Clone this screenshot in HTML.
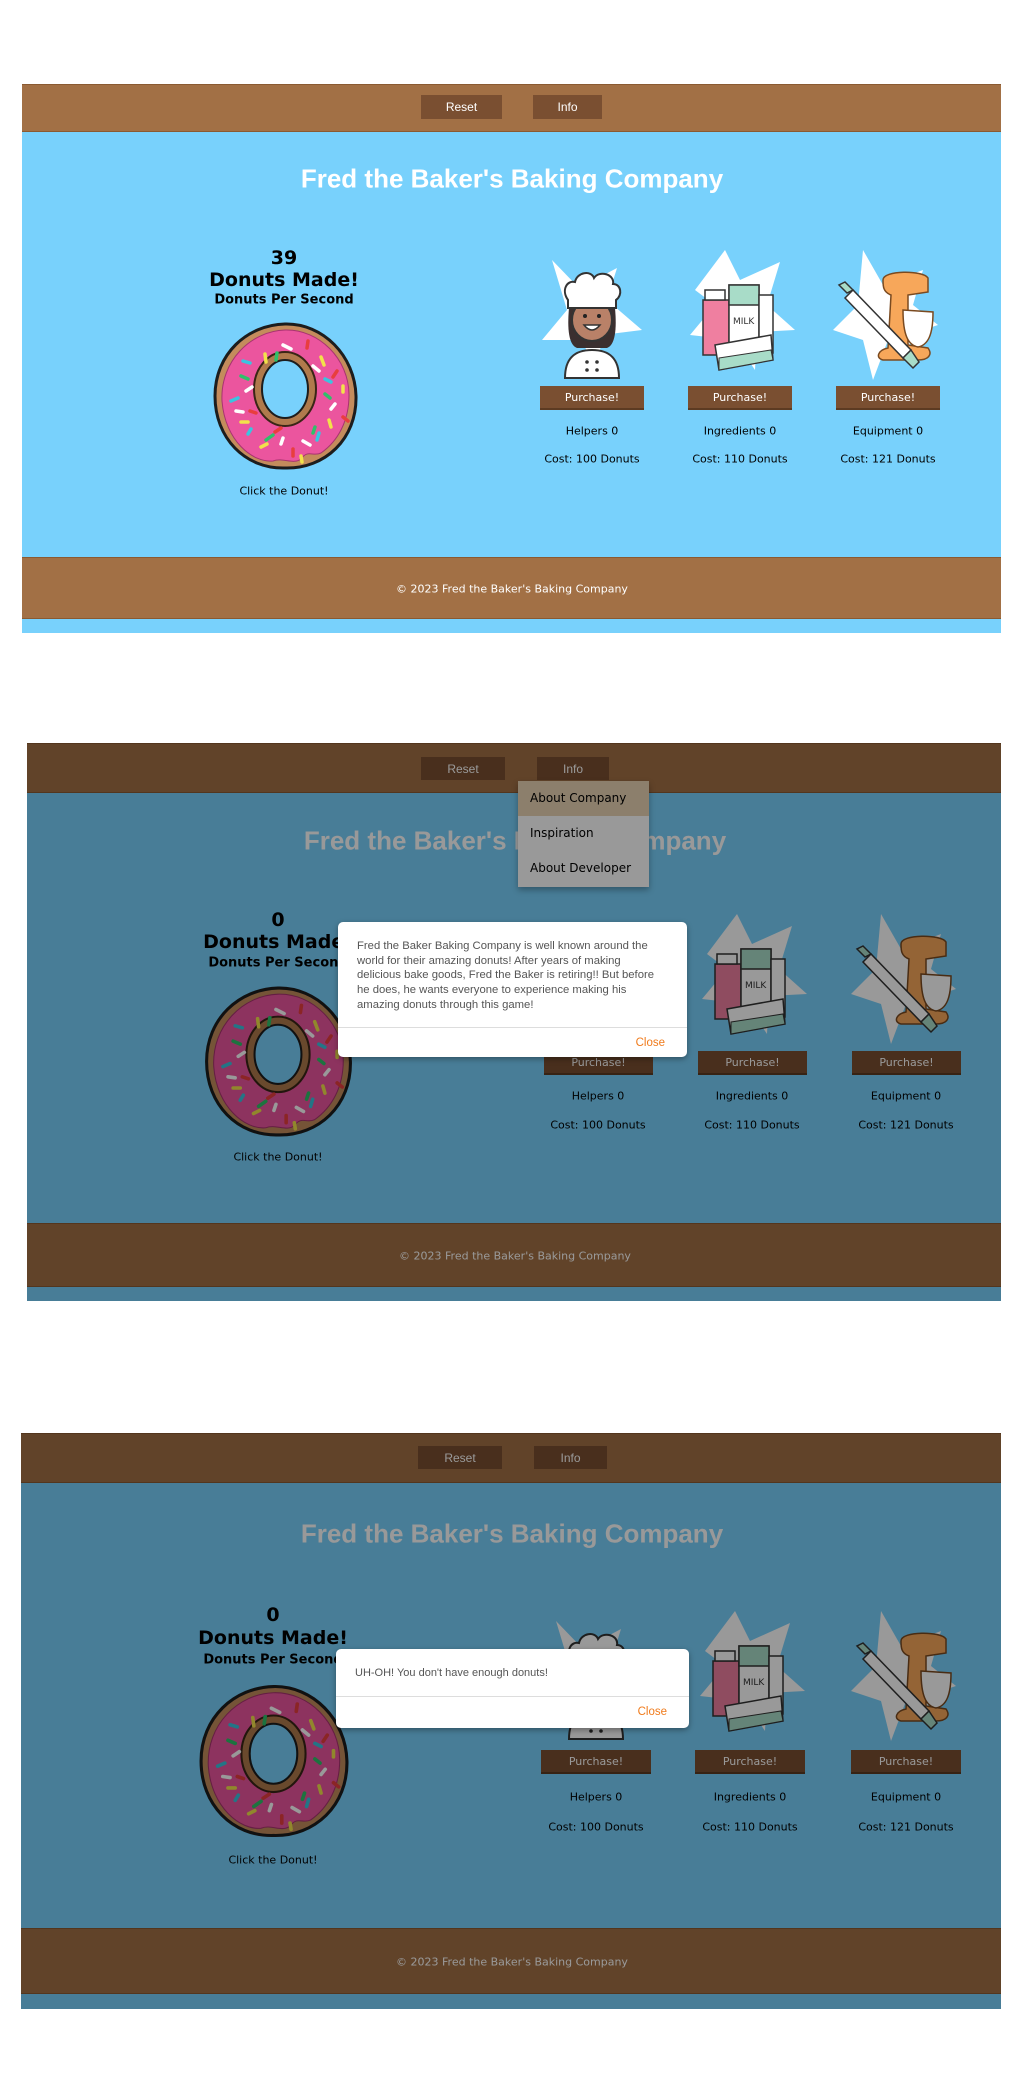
<!DOCTYPE html>
<html><head><meta charset="utf-8">
<style>
*{margin:0;padding:0;box-sizing:border-box}
body{width:1024px;height:2076px;background:#fff;position:relative;overflow:hidden;font-family:"DejaVu Sans",Verdana,sans-serif}
.p{position:absolute;background:#78d1fc;overflow:hidden}
.nav,.ft{position:absolute;left:0;right:0;background:#a27045;border-top:1px solid #8a5a32;border-bottom:1px solid #8a5a32}
.btn{position:absolute;background:#7a4f31;color:#fff;font:12px "Liberation Sans",Arial,sans-serif;display:flex;align-items:center;justify-content:center}
.c{position:absolute;transform:translate(-50%,-50%);white-space:nowrap;text-align:center}
.title{font:bold 26px "Liberation Sans",Arial,sans-serif;color:#fff}
.n{font-weight:bold;font-size:19px;color:#000}
.dps{font-weight:bold;font-size:13px;color:#000}
.sm{font-size:11px;color:#000}
.ftx{font-size:11px;color:#fff}
.pb{position:absolute;background:#7a4f31;color:#fff;font-size:11px;display:flex;align-items:center;justify-content:center;border-bottom:2px solid #5d3b22}
.dim{position:absolute;inset:0;background:rgba(0,0,0,0.4)}
.modal{position:absolute;background:#fff;border-radius:5px;box-shadow:0 2px 6px rgba(0,0,0,.35);font:11px "Liberation Sans",Arial,sans-serif;color:#555}
.close{position:absolute;color:#f07b1c;font:11.5px "Liberation Sans",Arial,sans-serif}
svg.u{position:absolute}
</style></head><body>
<svg width="0" height="0" style="position:absolute">
<defs>
<symbol id="donut" viewBox="0 0 145 150">
<path d="M72 3 C110 2 142 35 143 75 C144 118 112 148 72 147 C32 148 2 117 2 75 C2 33 34 4 72 3Z" fill="#c48c5c" stroke="#1d1d1d" stroke-width="3"/>
<path d="M72 9 C106 8 136 38 136 74 C136 100 125 120 108 132 C100 136 95 128 88 138 C80 144 70 136 60 140 C40 142 12 120 9 80 C7 40 38 10 72 9Z" fill="#eb559e" stroke="#a83370" stroke-width="1"/>
<ellipse cx="72" cy="68" rx="31" ry="37" fill="#b07a4c" stroke="#3a2616" stroke-width="2"/>
<ellipse cx="72" cy="68" rx="23" ry="29" fill="#78d1fc" stroke="#1d1d1d" stroke-width="2"/>
<g stroke-width="3.5" stroke-linecap="round">
<line x1="95" y1="20" x2="94" y2="27" stroke="#e83e3e"/><line x1="70" y1="24" x2="78" y2="28" stroke="#fff"/>
<line x1="30" y1="40" x2="37" y2="42" stroke="#3bc4e0"/><line x1="52" y1="33" x2="53" y2="41" stroke="#f2e24a"/>
<line x1="64" y1="32" x2="63" y2="39" stroke="#2fc06a"/><line x1="108" y1="36" x2="111" y2="44" stroke="#f2e24a"/>
<line x1="100" y1="45" x2="106" y2="50" stroke="#fff"/><line x1="124" y1="50" x2="120" y2="56" stroke="#e83e3e"/>
<line x1="28" y1="55" x2="35" y2="58" stroke="#2fc06a"/>
<line x1="112" y1="58" x2="118" y2="61" stroke="#3bc4e0"/><line x1="130" y1="65" x2="130" y2="71" stroke="#f2e24a"/>
<line x1="33" y1="70" x2="39" y2="66" stroke="#fff"/><line x1="112" y1="73" x2="117" y2="77" stroke="#2fc06a"/>
<line x1="18" y1="80" x2="25" y2="77" stroke="#3bc4e0"/><line x1="118" y1="88" x2="122" y2="83" stroke="#fff"/>
<line x1="23" y1="90" x2="30" y2="91" stroke="#fff"/><line x1="37" y1="90" x2="43" y2="92" stroke="#e83e3e"/>
<line x1="130" y1="96" x2="135" y2="100" stroke="#e83e3e"/><line x1="28" y1="101" x2="35" y2="101" stroke="#f2e24a"/>
<line x1="116" y1="99" x2="118" y2="106" stroke="#f2e24a"/><line x1="35" y1="113" x2="38" y2="108" stroke="#3bc4e0"/>
<line x1="53" y1="119" x2="60" y2="114" stroke="#2fc06a"/><line x1="62" y1="111" x2="68" y2="107" stroke="#e83e3e"/>
<line x1="106" y1="112" x2="104" y2="119" stroke="#3bc4e0"/><line x1="68" y1="123" x2="70" y2="117" stroke="#fff"/>
<line x1="90" y1="120" x2="97" y2="124" stroke="#fff"/><line x1="48" y1="126" x2="54" y2="123" stroke="#f2e24a"/>
<line x1="80" y1="128" x2="80" y2="135" stroke="#e83e3e"/><line x1="88" y1="135" x2="89" y2="141" stroke="#f2e24a"/>
<line x1="100" y1="112" x2="102" y2="106" stroke="#2fc06a"/>
</g>
</symbol>
<symbol id="chef" viewBox="0 0 110 130">
<polygon points="15,10 42,38 80,18 70,50 105,80 65,85 60,125 45,90 5,90 30,60" fill="#fff"/>
<path d="M28 128 C28 108 38 100 55 100 C72 100 82 108 82 128Z" fill="#fff" stroke="#333" stroke-width="2"/>
<path d="M32 58 C30 80 32 95 40 98 L70 98 C78 95 80 80 78 58Z" fill="#3b2f2f"/>
<ellipse cx="55" cy="70" rx="20" ry="21" fill="#b98168" stroke="#333" stroke-width="2"/>
<circle cx="48" cy="66" r="2" fill="#222"/><circle cx="62" cy="66" r="2" fill="#222"/>
<path d="M47 75 Q55 85 63 75Z" fill="#fff" stroke="#333" stroke-width="1.5"/>
<path d="M31 50 C24 40 30 30 38 32 C40 22 54 20 57 28 C62 20 78 24 76 34 C84 34 86 45 79 50 L79 58 L31 58Z" fill="#fff" stroke="#333" stroke-width="2"/>
<circle cx="50" cy="112" r="1.8" fill="#333"/><circle cx="60" cy="112" r="1.8" fill="#333"/><circle cx="50" cy="120" r="1.8" fill="#333"/><circle cx="60" cy="120" r="1.8" fill="#333"/>
</symbol>
<symbol id="ingr" viewBox="0 0 110 130">
<polygon points="40,0 55,30 95,12 82,55 110,80 72,82 70,120 50,90 5,85 30,55 10,40" fill="#fff"/>
<rect x="18" y="50" width="26" height="55" fill="#ef7fa0" stroke="#333" stroke-width="1.5"/>
<rect x="20" y="40" width="20" height="10" fill="#fff" stroke="#333" stroke-width="1.5"/>
<rect x="44" y="35" width="30" height="62" fill="#fff" stroke="#333" stroke-width="1.5"/>
<rect x="44" y="35" width="30" height="20" fill="#a8dcc8" stroke="#333" stroke-width="1.5"/>
<rect x="74" y="45" width="14" height="58" fill="#fff" stroke="#333" stroke-width="1.5"/>
<text x="48" y="74" font-size="9" font-family="DejaVu Sans" fill="#333">MILK</text>
<path d="M30 95 L86 85 L88 110 L34 120Z" fill="#fff" stroke="#333" stroke-width="1.5"/>
<path d="M34 108 L86 100 L88 110 L34 120Z" fill="#a8dcc8" stroke="#333" stroke-width="1"/>
</symbol>
<symbol id="mixer" viewBox="0 0 110 130">
<polygon points="30,0 50,35 90,20 80,55 105,75 75,85 80,110 55,90 40,130 30,90 0,80 25,55" fill="#fff"/>
<path d="M50 30 C50 20 90 20 95 28 L95 42 L75 45 L75 95 L95 98 C100 105 95 110 85 110 L50 110 C42 108 45 100 55 98 L58 45 C50 42 50 36 50 30Z" fill="#f7a75a" stroke="#7a4a20" stroke-width="1.5"/>
<path d="M70 60 L100 62 C100 85 95 95 85 97 C75 95 70 85 70 60Z" fill="#fff" stroke="#7a4a20" stroke-width="1.5"/>
<path d="M12 48 L70 108 L78 100 L20 40Z" fill="#fff" stroke="#333" stroke-width="1.5"/>
<path d="M6 35 L14 43 L20 40 L12 32Z" fill="#a8dcc8" stroke="#333" stroke-width="1.5"/>
<path d="M70 108 L80 118 L86 112 L78 100Z" fill="#a8dcc8" stroke="#333" stroke-width="1.5"/>
</symbol>
</defs></svg>

<!-- PANEL 1 -->
<div class="p" style="left:22px;top:84px;width:979px;height:549px">
<div class="nav" style="top:0;height:48px"></div>
<div class="btn" style="left:399px;top:11px;width:81px;height:24px">Reset</div>
<div class="btn" style="left:511px;top:11px;width:69px;height:24px">Info</div>
<div class="c title" style="left:490px;top:95px">Fred the Baker's Baking Company</div>
<div class="c n" style="left:262px;top:174px">39</div>
<div class="c n" style="left:262px;top:196px">Donuts Made!</div>
<div class="c dps" style="left:262px;top:216px">Donuts Per Second</div>
<svg class="u" style="left:191px;top:237px" width="145" height="150"><use href="#donut"/></svg>
<div class="c sm" style="left:262px;top:407px">Click the Donut!</div>
<svg class="u" style="left:515px;top:166px" width="110" height="130"><use href="#chef"/></svg>
<svg class="u" style="left:663px;top:166px" width="110" height="130"><use href="#ingr"/></svg>
<svg class="u" style="left:811px;top:166px" width="110" height="130"><use href="#mixer"/></svg>
<div class="pb" style="left:518px;top:302px;width:104px;height:24px">Purchase!</div>
<div class="pb" style="left:666px;top:302px;width:104px;height:24px">Purchase!</div>
<div class="pb" style="left:814px;top:302px;width:104px;height:24px">Purchase!</div>
<div class="c sm" style="left:570px;top:347px">Helpers 0</div>
<div class="c sm" style="left:718px;top:347px">Ingredients 0</div>
<div class="c sm" style="left:866px;top:347px">Equipment 0</div>
<div class="c sm" style="left:570px;top:375px">Cost: 100 Donuts</div>
<div class="c sm" style="left:718px;top:375px">Cost: 110 Donuts</div>
<div class="c sm" style="left:866px;top:375px">Cost: 121 Donuts</div>
<div class="ft" style="top:473px;height:62px"></div>
<div class="c ftx" style="left:490px;top:505px">© 2023 Fred the Baker's Baking Company</div>
</div>

<!-- PANEL 2 -->
<div class="p" style="left:27px;top:743px;width:974px;height:558px">
<div class="nav" style="top:0;height:50px"></div>
<div class="btn" style="left:394px;top:14px;width:84px;height:23px">Reset</div>
<div class="btn" style="left:510px;top:14px;width:72px;height:23px">Info</div>
<div class="c title" style="left:488px;top:98px">Fred the Baker's Baking Company</div>
<div class="c n" style="left:251px;top:177px">0</div>
<div class="c n" style="left:251px;top:199px">Donuts Made!</div>
<div class="c dps" style="left:251px;top:220px">Donuts Per Second</div>
<svg class="u" style="left:177px;top:242px" width="149" height="153"><use href="#donut"/></svg>
<div class="c sm" style="left:251px;top:414px">Click the Donut!</div>
<svg class="u" style="left:516px;top:171px" width="110" height="130"><use href="#chef"/></svg>
<svg class="u" style="left:670px;top:171px" width="110" height="130"><use href="#ingr"/></svg>
<svg class="u" style="left:824px;top:171px" width="110" height="130"><use href="#mixer"/></svg>
<div class="pb" style="left:517px;top:308px;width:109px;height:24px">Purchase!</div>
<div class="pb" style="left:671px;top:308px;width:109px;height:24px">Purchase!</div>
<div class="pb" style="left:825px;top:308px;width:109px;height:24px">Purchase!</div>
<div class="c sm" style="left:571px;top:353px">Helpers 0</div>
<div class="c sm" style="left:725px;top:353px">Ingredients 0</div>
<div class="c sm" style="left:879px;top:353px">Equipment 0</div>
<div class="c sm" style="left:571px;top:382px">Cost: 100 Donuts</div>
<div class="c sm" style="left:725px;top:382px">Cost: 110 Donuts</div>
<div class="c sm" style="left:879px;top:382px">Cost: 121 Donuts</div>
<div class="ft" style="top:480px;height:64px"></div>
<div class="c ftx" style="left:488px;top:513px">© 2023 Fred the Baker's Baking Company</div>
<div class="dim"></div>
</div>
<div style="position:absolute;left:518px;top:781px;width:131px;height:106px;background:#999;box-shadow:0 3px 6px rgba(0,0,0,.3);font-size:12px;color:#000">
<div style="height:35px;background:#8c7f6c;padding:10px 0 0 12px">About Company</div>
<div style="height:35px;padding:10px 0 0 12px">Inspiration</div>
<div style="height:36px;padding:10px 0 0 12px">About Developer</div>
</div>
<div class="modal" style="left:338px;top:922px;width:349px;height:135px">
<div style="position:absolute;left:19px;top:17px;width:305px;line-height:14.7px;font-size:11.3px">Fred the Baker Baking Company is well known around the world for their amazing donuts! After years of making delicious bake goods, Fred the Baker is retiring!! But before he does, he wants everyone to experience making his amazing donuts through this game!</div>
<div style="position:absolute;left:0;right:0;top:105px;border-top:1px solid #ddd"></div>
<div class="close" style="right:22px;top:115px">Close</div>
</div>

<!-- PANEL 3 -->
<div class="p" style="left:21px;top:1433px;width:980px;height:576px">
<div class="nav" style="top:0;height:50px"></div>
<div class="btn" style="left:397px;top:13px;width:84px;height:23px">Reset</div>
<div class="btn" style="left:513px;top:13px;width:73px;height:23px">Info</div>
<div class="c title" style="left:491px;top:101px">Fred the Baker's Baking Company</div>
<div class="c n" style="left:252px;top:182px">0</div>
<div class="c n" style="left:252px;top:205px">Donuts Made!</div>
<div class="c dps" style="left:252px;top:227px">Donuts Per Second</div>
<svg class="u" style="left:178px;top:249px" width="150" height="158"><use href="#donut"/></svg>
<div class="c sm" style="left:252px;top:427px">Click the Donut!</div>
<svg class="u" style="left:520px;top:176px" width="110" height="134"><use href="#chef"/></svg>
<svg class="u" style="left:674px;top:176px" width="110" height="134"><use href="#ingr"/></svg>
<svg class="u" style="left:830px;top:176px" width="110" height="134"><use href="#mixer"/></svg>
<div class="pb" style="left:520px;top:317px;width:110px;height:24px">Purchase!</div>
<div class="pb" style="left:674px;top:317px;width:110px;height:24px">Purchase!</div>
<div class="pb" style="left:830px;top:317px;width:110px;height:24px">Purchase!</div>
<div class="c sm" style="left:575px;top:364px">Helpers 0</div>
<div class="c sm" style="left:729px;top:364px">Ingredients 0</div>
<div class="c sm" style="left:885px;top:364px">Equipment 0</div>
<div class="c sm" style="left:575px;top:394px">Cost: 100 Donuts</div>
<div class="c sm" style="left:729px;top:394px">Cost: 110 Donuts</div>
<div class="c sm" style="left:885px;top:394px">Cost: 121 Donuts</div>
<div class="ft" style="top:495px;height:66px"></div>
<div class="c ftx" style="left:491px;top:529px">© 2023 Fred the Baker's Baking Company</div>
<div class="dim"></div>
</div>
<div class="modal" style="left:336px;top:1649px;width:353px;height:79px">
<div style="position:absolute;left:19px;top:18px">UH-OH! You don't have enough donuts!</div>
<div style="position:absolute;left:0;right:0;top:47px;border-top:1px solid #ddd"></div>
<div class="close" style="right:22px;top:57px">Close</div>
</div>
</body></html>
